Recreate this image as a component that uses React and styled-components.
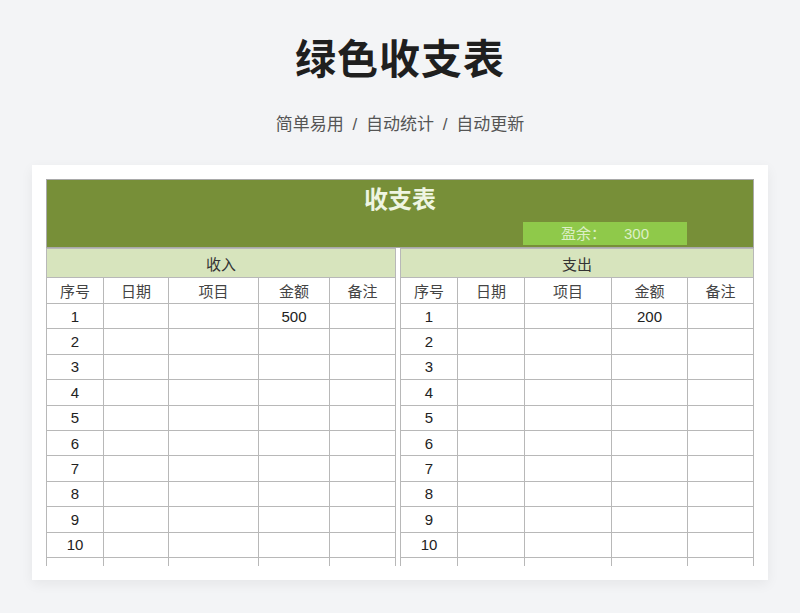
import React from "react";
import styled, { createGlobalStyle } from "styled-components";

const Global = createGlobalStyle`
  html, body { margin: 0; padding: 0; background: #f3f4f6; }
  body { font-family: "Liberation Sans", "Noto Sans CJK SC", sans-serif; }
`;
const Page = styled.div`
  width: 800px; height: 613px; overflow: hidden;
  display: flex; flex-direction: column; align-items: center;
`;
const Title = styled.h1`
  margin: 33px 0 0; height: 54px; line-height: 54px;
  font-size: 41px; font-weight: 700; color: #1f1f1f; letter-spacing: 1px;
`;
const Sub = styled.div`
  margin-top: 26px; font-size: 17px; color: #555; line-height: 24px;
  word-spacing: 4px;
`;
const Card = styled.div`
  margin-top: 28px; width: 708px; height: 387px; padding: 14px;
  background: #fff; box-shadow: 0 4px 12px rgba(0,0,0,0.06);
`;
const Sheet = styled.div`
  height: 387px; overflow: hidden; display: flex; flex-direction: column;
`;
const Banner = styled.div`
  height: 69px; flex: none; background: #778f38; border: 1px solid #a9a9a9; box-sizing: border-box;
  display: flex; flex-direction: column; align-items: center;
`;
const BannerTitle = styled.div`
  margin-top: 5px; color: #eef5e2; font-size: 24px; font-weight: 700; line-height: 30px;
`;
const BalanceRow = styled.div`
  width: 100%; display: flex; justify-content: flex-end; padding-right: 66px;
  box-sizing: border-box; margin-top: 7px;
`;
const Balance = styled.div`
  width: 164px; height: 23px; background: #8fc94a; color: #dcefc6;
  font-size: 15px; line-height: 23px; display: flex; justify-content: center; gap: 18px;
`;
const Tables = styled.div`
  display: flex; gap: 4px;
`;
const Table = styled.table`
  border-collapse: collapse; table-layout: fixed; flex: none;
  width: ${p => p.$w}px;
  td, th {
    border: 1px solid #b8b8b8; height: 24.4px; padding: 0; text-align: center;
    font-size: 15px; color: #222; font-weight: 400; overflow: hidden; white-space: nowrap;
  }
`;
const Section = styled.th`
  background: #d7e4bd; height: 28px !important; color: #333 !important;
`;
const Head = styled.th`
  color: #444 !important; height: 25px !important;
`;

const cols = ["序号", "日期", "项目", "金额", "备注"];
function Side({ name, widths, amount }) {
  const w = widths.reduce((a, b) => a + b, 0);
  return (
    <Table $w={w}>
      <colgroup>{widths.map((x, i) => <col key={i} style={{ width: x }} />)}</colgroup>
      <thead>
        <tr><Section colSpan={5}>{name}</Section></tr>
        <tr>{cols.map(c => <Head key={c}>{c}</Head>)}</tr>
      </thead>
      <tbody>
        {Array.from({ length: 11 }, (_, i) => (
          <tr key={i}>
            <td>{i + 1}</td><td></td><td></td><td>{i === 0 ? amount : ""}</td><td></td>
          </tr>
        ))}
      </tbody>
    </Table>
  );
}

export default function App() {
  return (
    <Page>
      <Global />
      <Title>绿色收支表</Title>
      <Sub>简单易用 / 自动统计 / 自动更新</Sub>
      <Card>
        <Sheet>
          <Banner>
            <BannerTitle>收支表</BannerTitle>
            <BalanceRow><Balance><span>盈余：</span><span>300</span></Balance></BalanceRow>
          </Banner>
          <Tables>
            <Side name="收入" widths={[57, 65, 90, 71, 66]} amount="500" />
            <Side name="支出" widths={[57, 67, 87, 76, 66]} amount="200" />
          </Tables>
        </Sheet>
      </Card>
    </Page>
  );
}
